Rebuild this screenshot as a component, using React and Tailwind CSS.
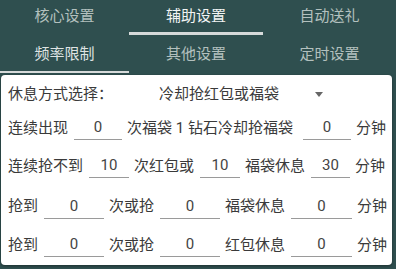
import React from "react";

const topTabs = ["核心设置", "辅助设置", "自动送礼"];
const subTabs = ["频率限制", "其他设置", "定时设置"];

function Field({ value, w }) {
  return (
    <div
      className={`ml-[6px] mr-[5px] flex h-[24px] shrink-0 items-center justify-center border-b-[1.5px] border-[#9a9a9a] text-[#444] ${w}`}
    >
      {value}
    </div>
  );
}

function Label({ children }) {
  return <span className="shrink-0 whitespace-pre">{children}</span>;
}

export default function App() {
  const active = 1;
  const sub = 0;

  return (
    <div className="h-[269px] w-[396px] overflow-hidden bg-[#2f4f4f] font-['Roboto','Noto_Sans_CJK_SC',sans-serif] text-[15px]">
      {/* top tabs */}
      <div className="grid h-[36px] grid-cols-[129px_134px_133px]">
        {topTabs.map((t, i) => (
          <div key={t} className="relative flex items-center justify-center pb-[4px]">
            <span className={i === active ? "text-[#f2f4f4]" : "text-[#b3c0be]"}>{t}</span>
            {i === active ? (
              <div className="absolute bottom-[1px] left-0 right-0 h-[3px] bg-[#d6dada]" />
            ) : null}
          </div>
        ))}
      </div>

      {/* sub tabs */}
      <div className="grid h-[39px] grid-cols-[129px_134px_133px]">
        {subTabs.map((t, i) => (
          <div key={t} className="relative flex items-center justify-center pb-[2px]">
            <span className={i === sub ? "text-[#dfe3e3]" : "text-[#b3c0be]"}>{t}</span>
            {i === sub ? (
              <div className="absolute bottom-[2px] left-0 right-0 h-[2px] bg-[#d6dada]" />
            ) : null}
          </div>
        ))}
      </div>

      {/* card */}
      <div className="mx-[1px] mr-[4px] h-[190px] rounded-[4px] bg-white pl-[7px] pr-[6px] pt-[2px] text-[#3a3a3a] shadow-[0_1px_3px_rgba(0,0,0,0.4)]">
        <div className="flex h-[34px] items-center">
          <Label>休息方式选择：</Label>
          <span className="ml-[46px]">冷却抢红包或福袋</span>
          <span className="ml-[36px] mt-[1px] h-0 w-0 border-x-[4.5px] border-t-[5px] border-x-transparent border-t-[#666]" />
        </div>

        <div className="flex h-[34px] items-center">
          <Label>连续出现</Label>
          <Field value="0" w="w-[48px]" />
          <Label>次福袋 1 钻石冷却抢福袋</Label>
          <div className="ml-auto flex items-center">
            <Field value="0" w="w-[48px]" />
            <Label>分钟</Label>
          </div>
        </div>

        <div className="flex h-[42px] items-center">
          <Label>连续抢不到</Label>
          <Field value="10" w="w-[40px]" />
          <Label>次红包或</Label>
          <Field value="10" w="w-[40px]" />
          <Label>福袋休息</Label>
          <Field value="30" w="w-[39px]" />
          <Label>分钟</Label>
        </div>

        <div className="flex h-[39px] items-center">
          <Label>抢到</Label>
          <Field value="0" w="w-[60px]" />
          <Label>次或抢</Label>
          <Field value="0" w="w-[60px]" />
          <Label>福袋休息</Label>
          <Field value="0" w="w-[61px]" />
          <Label>分钟</Label>
        </div>

        <div className="flex h-[38px] items-center">
          <Label>抢到</Label>
          <Field value="0" w="w-[60px]" />
          <Label>次或抢</Label>
          <Field value="0" w="w-[60px]" />
          <Label>红包休息</Label>
          <Field value="0" w="w-[61px]" />
          <Label>分钟</Label>
        </div>
      </div>
    </div>
  );
}
